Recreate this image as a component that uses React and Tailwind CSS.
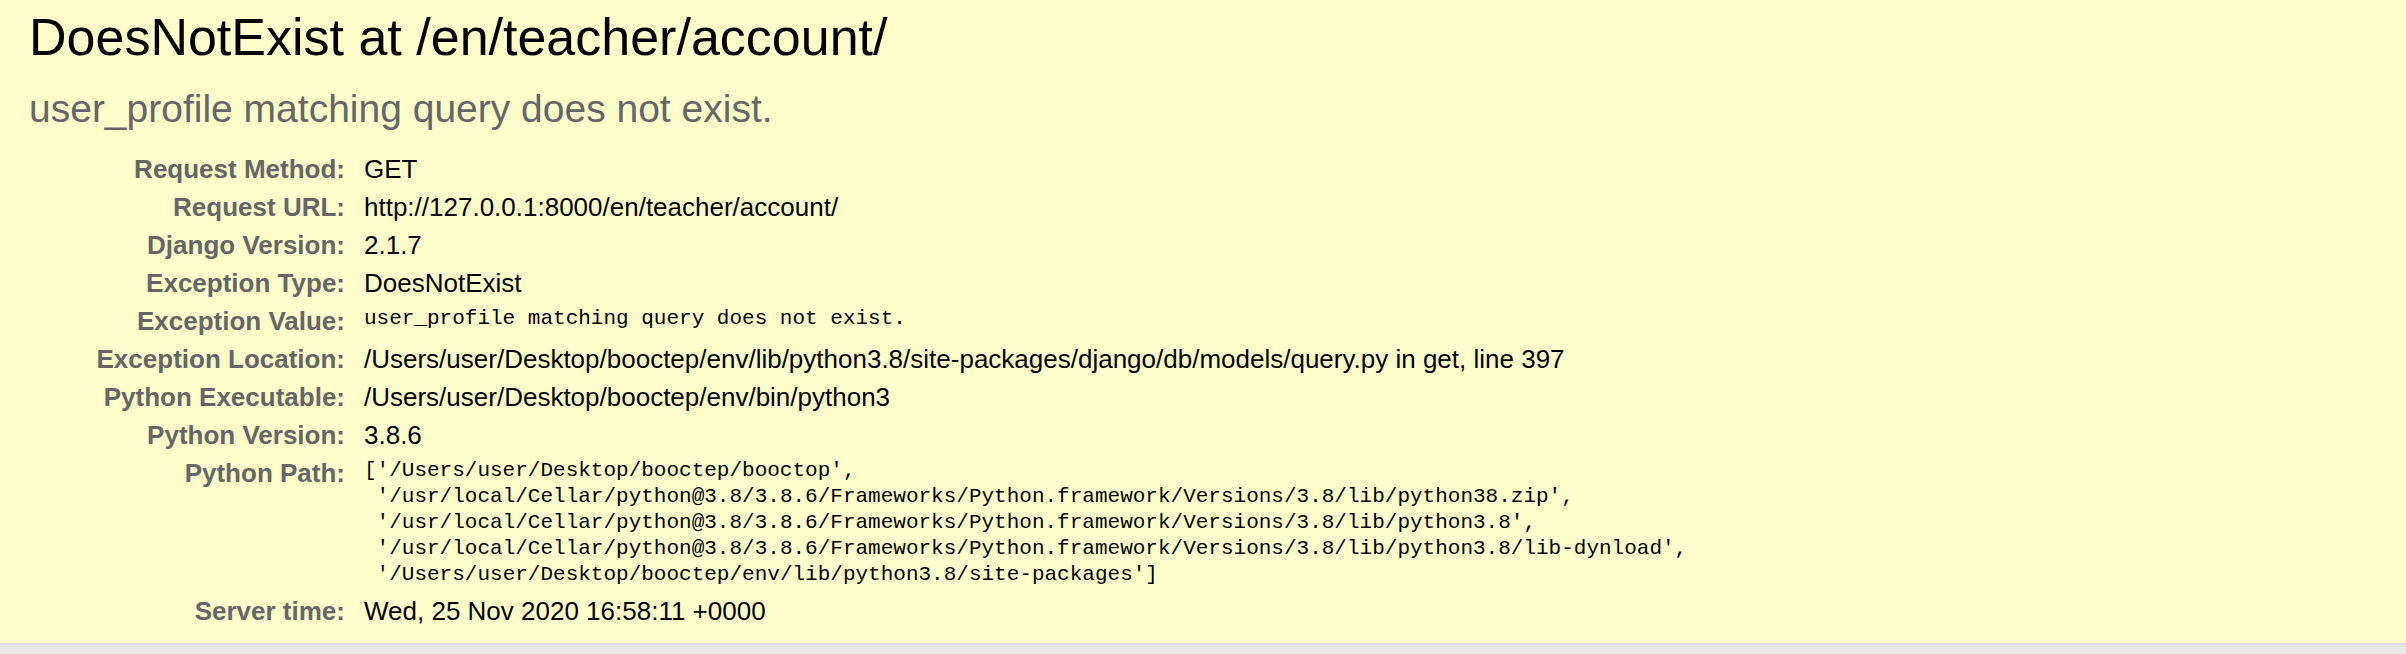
import React from 'react';

const rows = [
    { label: 'Request Method:', value: 'GET' },
    { label: 'Request URL:', value: 'http://127.0.0.1:8000/en/teacher/account/' },
    { label: 'Django Version:', value: '2.1.7' },
    { label: 'Exception Type:', value: 'DoesNotExist' },
    { label: 'Exception Value:', value: 'user_profile matching query does not exist.', mono: true },
    { label: 'Exception Location:', value: '/Users/user/Desktop/booctep/env/lib/python3.8/site-packages/django/db/models/query.py in get, line 397' },
    { label: 'Python Executable:', value: '/Users/user/Desktop/booctep/env/bin/python3' },
    { label: 'Python Version:', value: '3.8.6' },
    {
        label: 'Python Path:',
        mono: true,
        value: [
            "['/Users/user/Desktop/booctep/booctop',",
            " '/usr/local/Cellar/python@3.8/3.8.6/Frameworks/Python.framework/Versions/3.8/lib/python38.zip',",
            " '/usr/local/Cellar/python@3.8/3.8.6/Frameworks/Python.framework/Versions/3.8/lib/python3.8',",
            " '/usr/local/Cellar/python@3.8/3.8.6/Frameworks/Python.framework/Versions/3.8/lib/python3.8/lib-dynload',",
            " '/Users/user/Desktop/booctep/env/lib/python3.8/site-packages']",
        ].join('\n'),
    },
    { label: 'Server time:', value: 'Wed, 25 Nov 2020 16:58:11 +0000' },
];

function App() {
    return (
        <div className="h-[654px] w-full flex flex-col overflow-hidden bg-white font-['Liberation_Sans',Arial,sans-serif] text-black">
            <div className="bg-[#ffffcc] px-[29px] pt-[8px] pb-[13px] border-b-2 border-[#dddddd]">
                <h1 className="text-[52px] leading-[58px] font-normal">DoesNotExist at /en/teacher/account/</h1>
                <h2 className="mt-[21px] text-[39px] leading-[44px] font-normal text-[#666666]">
                    user_profile matching query does not exist.
                </h2>
                <div className="mt-[19px] grid grid-cols-[329px_1fr] items-start text-[26px]">
                    {rows.map((row) => (
                        <React.Fragment key={row.label}>
                            <div className="text-right font-bold text-[#666666] pl-[6px] pr-[13px] py-[4px] leading-[30px] whitespace-nowrap">
                                {row.label}
                            </div>
                            <div className="px-[6px] py-[4px] leading-[30px]">
                                {row.mono ? (
                                    <pre className="font-['Liberation_Mono','Courier_New',monospace] text-[21px] leading-[26px] whitespace-pre-wrap">
                                        {row.value}
                                    </pre>
                                ) : (
                                    row.value
                                )}
                            </div>
                        </React.Fragment>
                    ))}
                </div>
            </div>
            <div className="flex-1 bg-[#e8e8e8]" />
        </div>
    );
}

export default App;
